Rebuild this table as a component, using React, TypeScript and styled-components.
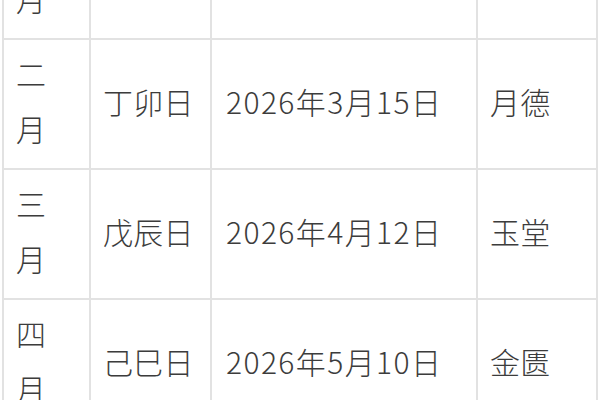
import React from 'react';
import styled, { createGlobalStyle } from 'styled-components';

const GlobalStyle = createGlobalStyle`
  html, body {
    margin: 0;
    padding: 0;
    background: #ffffff;
  }
  body {
    font-family: "Noto Sans CJK SC", "Noto Sans", sans-serif;
  }
`;

const Viewport = styled.div`
  width: 600px;
  height: 400px;
  overflow: hidden;
  padding: 0 3px 0 2px;
  box-sizing: border-box;
`;

const Table = styled.table`
  width: 594px;
  margin-top: -92px;
  border-collapse: collapse;
  table-layout: fixed;
  color: #3c3c3c;
  font-size: 30px;
  font-weight: 300;
  line-height: 55px;
`;

const Col = styled.col<{ $w: number }>`
  width: ${p => p.$w}px;
`;

type CellKind = 'stack' | 'plain' | 'date';

const Cell = styled.td<{ $kind?: CellKind }>`
  border: 2px solid #e2e2e2;
  padding: 6px 12px 12px ${p => (p.$kind === 'date' ? '14px' : '12px')};
  text-align: left;
  vertical-align: middle;
  white-space: nowrap;
  letter-spacing: ${p => (p.$kind === 'date' ? '1.4px' : p.$kind === 'stack' ? '0' : '0.3px')};
`;

const StackText = styled.span`
  display: block;
  width: 1.2em;
  white-space: normal;
  word-break: break-all;
`;

const rows = [
  { month: '正月', day: '丙寅日', date: '2026年2月17日', star: '天德' },
  { month: '二月', day: '丁卯日', date: '2026年3月15日', star: '月德' },
  { month: '三月', day: '戊辰日', date: '2026年4月12日', star: '玉堂' },
  { month: '四月', day: '己巳日', date: '2026年5月10日', star: '金匮' },
];

const App: React.FC = () => {
  return (
    <>
      <GlobalStyle />
      <Viewport>
        <Table>
          <colgroup>
            <Col $w={87} />
            <Col $w={121} />
            <Col $w={266} />
            <Col $w={120} />
          </colgroup>
          <tbody>
            {rows.map(r => (
              <tr key={r.month}>
                <Cell $kind="stack">
                  <StackText>{r.month}</StackText>
                </Cell>
                <Cell $kind="plain">{r.day}</Cell>
                <Cell $kind="date">{r.date}</Cell>
                <Cell $kind="plain">{r.star}</Cell>
              </tr>
            ))}
          </tbody>
        </Table>
      </Viewport>
    </>
  );
};

export default App;
